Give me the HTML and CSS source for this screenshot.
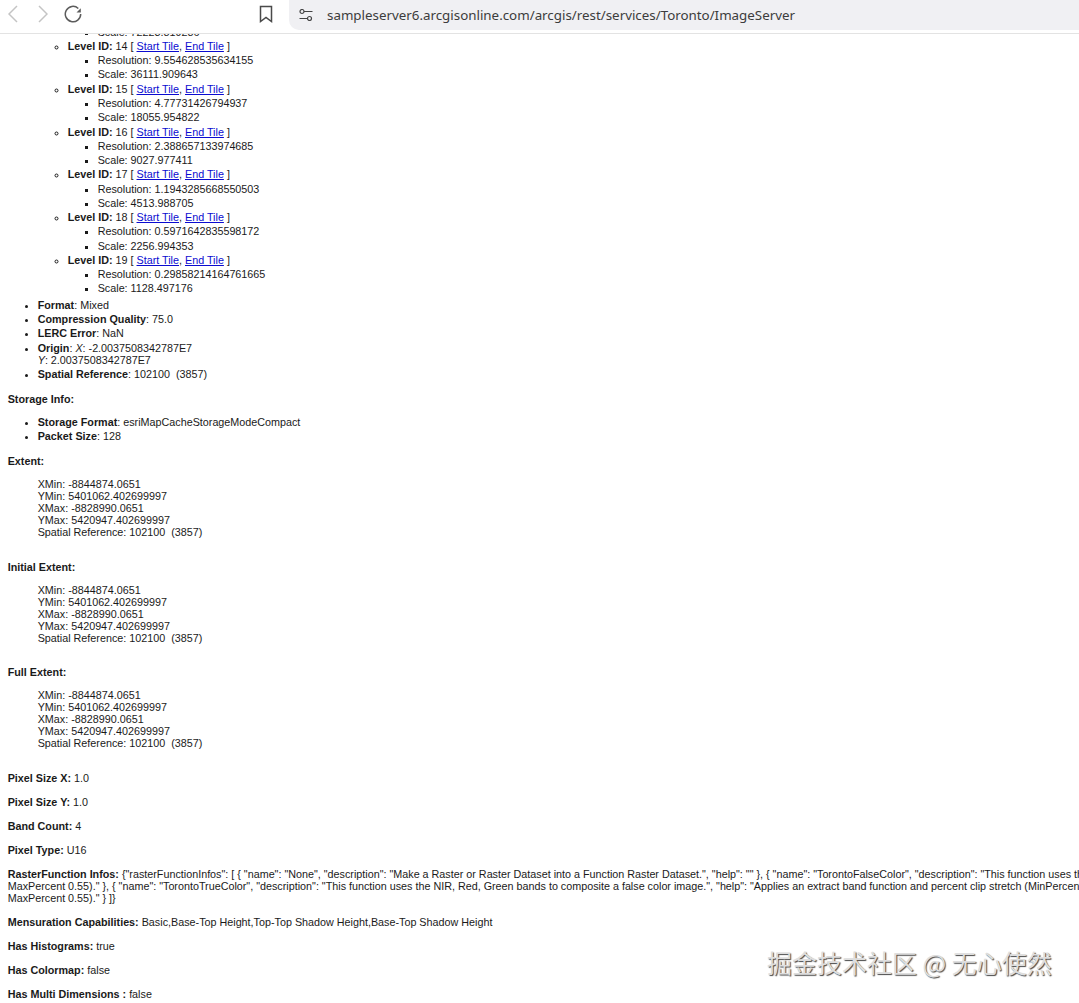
FILE: index.html
```html
<!DOCTYPE html>
<html lang="en">
<head>
<meta charset="utf-8">
<title>Toronto (ImageServer)</title>
<link rel="stylesheet" href="styles.css">
</head>
<body>
<header class="chrome">
  <div class="nav">
    <svg class="ico back" viewBox="0 0 10 18"><path d="M9 1 1 9l8 8"/></svg>
    <svg class="ico fwd" viewBox="0 0 10 18"><path d="M1 1l8 8-8 8"/></svg>
    <svg class="ico reload" viewBox="0 0 18 18"><path d="M14.300 3.500A7.700 7.700 0 1 0 16.700 9"/><path class="fill" d="M16.800 3.200v4.300h-4.300z"/></svg>
  </div>
  <svg class="ico mark" viewBox="0 0 14 18"><path d="M1.500 1.500h11v15L7 12.500l-5.500 4z"/></svg>
  <div class="omni">
    <svg class="ico tune" viewBox="0 0 14 12"><circle cx="3" cy="2.500" r="2"/><path d="M5 2.500h8.500M.5 9.500H8"/><circle cx="10.500" cy="9.500" r="2"/></svg>
    <span class="url">sampleserver6.arcgisonline.com/arcgis/rest/services/Toronto/ImageServer</span>
  </div>
</header>
<main class="view">
  <div class="page">
    <ul class="top">
      <li>Tile Info
        <ul class="levels">
          <li><b>Level ID:</b> 13 [ <a href="#">Start Tile</a>, <a href="#">End Tile</a> ]
            <ul><li>Resolution: 19.10925707126831</li><li>Scale: 72223.819286</li></ul></li>
          <li><b>Level ID:</b> 14 [ <a href="#">Start Tile</a>, <a href="#">End Tile</a> ]
            <ul><li>Resolution: 9.554628535634155</li><li>Scale: 36111.909643</li></ul></li>
          <li><b>Level ID:</b> 15 [ <a href="#">Start Tile</a>, <a href="#">End Tile</a> ]
            <ul><li>Resolution: 4.77731426794937</li><li>Scale: 18055.954822</li></ul></li>
          <li><b>Level ID:</b> 16 [ <a href="#">Start Tile</a>, <a href="#">End Tile</a> ]
            <ul><li>Resolution: 2.388657133974685</li><li>Scale: 9027.977411</li></ul></li>
          <li><b>Level ID:</b> 17 [ <a href="#">Start Tile</a>, <a href="#">End Tile</a> ]
            <ul><li>Resolution: 1.1943285668550503</li><li>Scale: 4513.988705</li></ul></li>
          <li><b>Level ID:</b> 18 [ <a href="#">Start Tile</a>, <a href="#">End Tile</a> ]
            <ul><li>Resolution: 0.5971642835598172</li><li>Scale: 2256.994353</li></ul></li>
          <li><b>Level ID:</b> 19 [ <a href="#">Start Tile</a>, <a href="#">End Tile</a> ]
            <ul><li>Resolution: 0.29858214164761665</li><li>Scale: 1128.497176</li></ul></li>
        </ul>
      </li>
      <li><b>Format</b>: Mixed</li>
      <li><b>Compression Quality</b>: 75.0</li>
      <li><b>LERC Error</b>: NaN</li>
      <li><b>Origin</b>: <i>X</i>: -2.0037508342787E7<br><i>Y</i>: 2.0037508342787E7</li>
      <li><b>Spatial Reference</b>: 102100&nbsp; (3857)</li>
    </ul>
    <p class="head"><b>Storage Info:</b></p>
    <ul class="plain">
      <li><b>Storage Format</b>: esriMapCacheStorageModeCompact</li>
      <li><b>Packet Size</b>: 128</li>
    </ul>
    <p class="head"><b>Extent:</b></p>
    <div class="ext">XMin: -8844874.0651<br>YMin: 5401062.402699997<br>XMax: -8828990.0651<br>YMax: 5420947.402699997<br>Spatial Reference: 102100&nbsp; (3857)</div>
    <p class="head"><b>Initial Extent:</b></p>
    <div class="ext">XMin: -8844874.0651<br>YMin: 5401062.402699997<br>XMax: -8828990.0651<br>YMax: 5420947.402699997<br>Spatial Reference: 102100&nbsp; (3857)</div>
    <p class="head"><b>Full Extent:</b></p>
    <div class="ext">XMin: -8844874.0651<br>YMin: 5401062.402699997<br>XMax: -8828990.0651<br>YMax: 5420947.402699997<br>Spatial Reference: 102100&nbsp; (3857)</div>
    <p class="item"><b>Pixel Size X:</b> 1.0</p>
    <p class="item"><b>Pixel Size Y:</b> 1.0</p>
    <p class="item"><b>Band Count:</b> 4</p>
    <p class="item"><b>Pixel Type:</b> U16</p>
    <p class="item long"><b>RasterFunction Infos:</b> {"rasterFunctionInfos": [ { "name": "None", "description": "Make a Raster or Raster Dataset into a Function Raster Dataset.", "help": "" }, { "name": "TorontoFalseColor", "description": "This function uses the NIR, Red, Green bands to composite a false color image.",<br>MaxPercent 0.55)." }, { "name": "TorontoTrueColor", "description": "This function uses the NIR, Red, Green bands to composite a false color image.", "help": "Applies an extract band function and percent clip stretch (MinPercent 0.25,<br>MaxPercent 0.55)." } ]}</p>
    <p class="item"><b>Mensuration Capabilities:</b> Basic,Base-Top Height,Top-Top Shadow Height,Base-Top Shadow Height</p>
    <p class="item"><b>Has Histograms:</b> true</p>
    <p class="item"><b>Has Colormap:</b> false</p>
    <p class="item"><b>Has Multi Dimensions :</b> false</p>
  </div>
  <div class="mark-text">掘金技术社区 @ 无心使然</div>
</main>
</body>
</html>
```
FILE: styles.css
```css
html, body { margin: 0; padding: 0; background: #fff; }
body { width: 1079px; height: 1003px; overflow: hidden; display: flex; flex-direction: column; }

.chrome { flex: none; height: 33px; display: flex; align-items: flex-start; background: #fff; border-bottom: 1px solid #e3e3e3; }
.nav { display: flex; align-items: center; width: 255px; padding: 5px 0 0 8px; box-sizing: border-box; }
.ico { fill: none; stroke: #5c5c5c; stroke-width: 1.500; display: block; flex: none; }
.ico .fill { fill: #5c5c5c; stroke: none; }
.back, .fwd { width: 10px; height: 18px; stroke: #c4c4c4; }
.fwd { margin-left: 20px; }
.reload { width: 18px; height: 18px; margin-left: 16px; }
.mark { width: 14px; height: 18px; margin: 5px 0 0 4px; stroke: #4a4a4a; }
.omni { margin-left: 16px; flex: 1; height: 30px; background: #f0f0f3; border-radius: 0 0 0 10px; display: flex; align-items: center; padding-left: 10px; }
.tune { width: 14px; height: 12px; stroke: #444; stroke-width: 1.200; }
.url { margin-left: 14px; font: 13.350px/16px "Noto Sans", "Open Sans", sans-serif; color: #3c3c3c; white-space: nowrap; }

.view { flex: 1; position: relative; overflow: hidden; font: 10.770px/12px "Liberation Sans", Arial, sans-serif; color: #1a1a1a; }
.page { margin-top: -53.400px; padding-left: 7.700px; }
.page b { font-weight: 700; }
.page a { color: #0b0bd0; }
ul { margin: 0; padding: 0 0 0 30px; }
li { margin-top: 2.270px; }
ul.top { list-style: disc; }
ul.levels { list-style: circle; padding-bottom: 2px; }
ul.levels ul { list-style: square; }
.head { margin: 13px 0 11px; }
.plain { list-style: disc; }
.ext { padding-left: 30px; margin-bottom: 22.500px; }
.item { margin: 12px 0; }
.long { white-space: nowrap; }

.mark-text { position: absolute; left: 767px; top: 913px; font: 400 25px/30px "Noto Sans CJK SC", sans-serif; color: #dedede; text-shadow: 1px 1px 1px #484848; white-space: nowrap; }
```
